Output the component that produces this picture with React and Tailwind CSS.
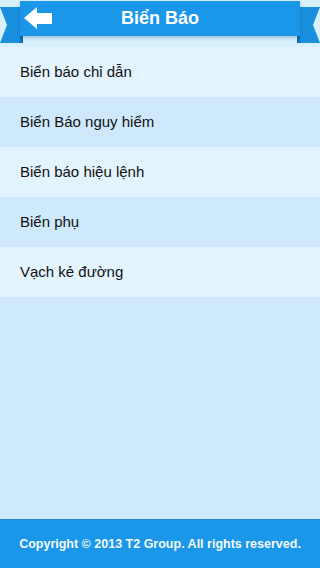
const items = [
  "Biển báo chỉ dẫn",
  "Biển Báo nguy hiểm",
  "Biển báo hiệu lệnh",
  "Biển phụ",
  "Vạch kẻ đường",
];

function Tail({ side }) {
  const flip = side === "right";
  return (
    <svg
      width="23"
      height="36"
      viewBox="0 0 23 36"
      className={flip ? "absolute right-0 top-[7px] -scale-x-100" : "absolute left-0 top-[7px]"}
    >
      <path d="M0 0 H23 V36 H0 L7 18 Z" fill="#1a8fdd" />
      <path d="M20 29 H23 V36 H20 Z" fill="#0d6fb4" />
    </svg>
  );
}

export default function App() {
  return (
    <div className="flex h-[568px] w-[320px] flex-col bg-[#cde9fb] [font-family:'Liberation_Sans',Arial,sans-serif]">
      <div className="relative h-[47px] shrink-0 bg-[#d8effc] pt-[1px]">
        <Tail side="left" />
        <Tail side="right" />
        <div className="relative mx-[20px] flex h-[35px] items-center justify-center bg-[#1b97e9] shadow-[0_2px_3px_rgba(0,60,120,0.25)]">
          <button className="absolute left-[4px] top-[6px]">
            <svg width="29" height="22" viewBox="0 0 29 22">
              <path d="M0 11 L13 0 V6 H28 V17 H13 V22 Z" fill="#fff" />
            </svg>
          </button>
          <h1 className="text-[18px] font-bold text-white">Biển Báo</h1>
        </div>
      </div>

      <ul className="flex flex-col">
        {items.map((t, i) => (
          <li
            key={t}
            className={
              i % 2 === 0
                ? "flex h-[50px] items-center bg-[#e3f4fe] px-[20px] text-[15px] text-[#111]"
                : "flex h-[50px] items-center bg-[#cde9fb] px-[20px] text-[15px] text-[#111]"
            }
          >
            {t}
          </li>
        ))}
      </ul>

      <div className="flex-1" />

      <footer className="flex h-[49px] shrink-0 items-center justify-center border-t border-[#1a8ad6] bg-[#1b97e9]">
        <p className="text-[12.5px] font-bold text-[#f3f9fe]">
          Copyright © 2013 T2 Group. All rights reserved.
        </p>
      </footer>
    </div>
  );
}
